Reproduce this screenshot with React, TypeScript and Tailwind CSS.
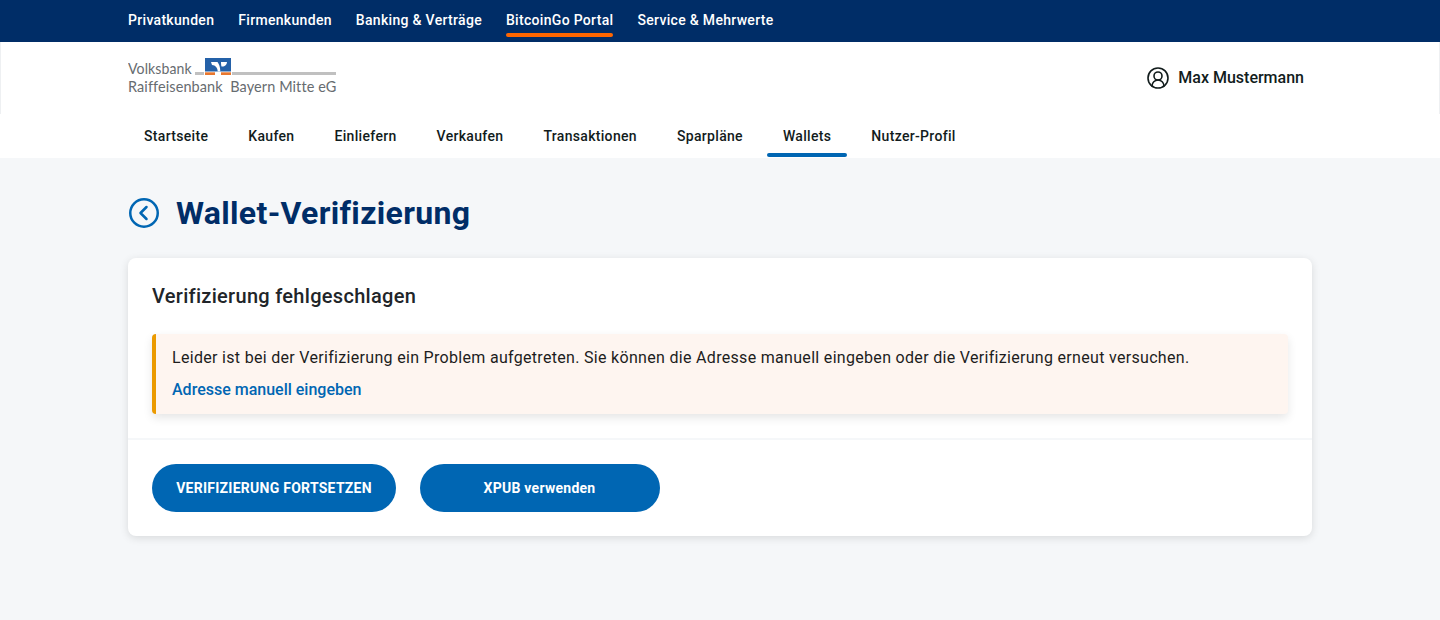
import { CircleUserRound } from "lucide-react";

const TOP_LINKS = ["Privatkunden", "Firmenkunden", "Banking & Verträge", "BitcoinGo Portal", "Service & Mehrwerte"];
const NAV_LINKS = ["Startseite", "Kaufen", "Einliefern", "Verkaufen", "Transaktionen", "Sparpläne", "Wallets", "Nutzer-Profil"];

function Logo() {
  return (
    <div className="w-[208px] font-['Lato',sans-serif] text-[#676c70] text-[16px] tracking-[0.1px]">
      <div className="flex items-end h-[20px]">
        <span className="w-[63px] whitespace-nowrap leading-[20px] origin-left scale-x-[0.88]">Volksbank</span>
        <span className="w-[9px] h-[3px] bg-[#c0c0c0] ml-[4px] mr-[1px] mb-[3px]" />
        <svg width="26" height="17" viewBox="0 0 26 17" className="shrink-0 mb-[3px]">
          <rect width="26" height="13.500" fill="#2461a8" />
          <path d="M6 4H12.500C14 6 15.300 9 15.300 13.500H12.700C12.700 10 10.500 7 7 7Z" fill="#fff" />
          <path d="M16 4H22C22 6.500 19.500 9 16.500 8.500C16 6.500 16 5.500 16 4Z" fill="#fff" />
          <rect y="14.300" width="10" height="2.700" fill="#e8772e" />
          <rect x="16" y="14.300" width="10" height="2.700" fill="#e8772e" />
        </svg>
        <span className="flex-1 h-[3px] bg-[#c0c0c0] ml-[1px] mb-[3px]" />
      </div>
      <div className="whitespace-nowrap leading-[18px] -mt-[1px] origin-left scale-x-[0.905]">Raiffeisenbank&nbsp; Bayern Mitte eG</div>
    </div>
  );
}

export default function App() {
  return (
    <div className="min-h-[620px] bg-[#f5f7f9] font-['Roboto',sans-serif]">
      <div className="h-[42px] bg-[#002d67] pl-[128px] flex gap-[24px]">
        {TOP_LINKS.map((l) => (
          <a key={l} className="h-[37px] flex flex-col text-[14px] font-medium tracking-[0.31px] text-white">
            <span className="flex-1 flex items-center pt-[7px]">{l}</span>
            <span className={`h-[4px] rounded-full ${l === "BitcoinGo Portal" ? "bg-[#ff6600]" : ""}`} />
          </a>
        ))}
      </div>

      <div className="h-[72px] bg-white border-x border-[#eef0f2] pl-[127px] pr-[135px] flex items-center justify-between">
        <div className="pb-[3px]">
          <Logo />
        </div>
        <div className="flex items-center gap-[8px] text-[#121c1c]">
          <CircleUserRound size={24} strokeWidth={1.6} />
          <span className="text-[16px] font-medium">Max Mustermann</span>
        </div>
      </div>

      <div className="h-[44px] bg-white pl-[128px] flex">
        {NAV_LINKS.map((l) => (
          <a key={l} className="h-[43px] px-[16px] mr-[8px] flex flex-col text-[14px] font-medium tracking-[0.32px] text-[#121c1c]">
            <span className="flex-1 flex items-center pt-[5px]">{l}</span>
            <span className={`h-[4px] rounded-full ${l === "Wallets" ? "bg-[#0066b3] -mx-[16px]" : ""}`} />
          </a>
        ))}
      </div>

      <div className="pl-[128px] pr-[128px]">
        <div className="h-[100px] flex items-center gap-[16px] pt-[10px]">
          <svg width="32" height="32" viewBox="0 0 32 32" fill="none" stroke="#0066b3" className="shrink-0">
            <circle cx="16" cy="16" r="13.750" strokeWidth="2.500" />
            <path d="M18.500 10l-6 6 6 6" strokeWidth="2.500" strokeLinecap="round" strokeLinejoin="round" />
          </svg>
          <h1 className="text-[32px] font-bold text-[#002d67] leading-none tracking-[0.33px]">Wallet-Verifizierung</h1>
        </div>

        <div className="bg-white rounded-[8px] shadow-[0_2px_8px_rgba(0,0,0,0.12)]">
          <div className="px-[24px] pt-[24px] pb-[24px] h-[182px] border-b-2 border-[#f5f7f9]">
            <h2 className="text-[20px] font-medium text-[#212529] leading-[28px] tracking-[0.3px]">Verifizierung fehlgeschlagen</h2>
            <div className="mt-[24px] h-[80px] bg-[#fef5f0] border-l-[4px] border-[#eb9a00] rounded-[4px] pl-[16px] pt-[13px] shadow-[0_4px_10px_rgba(0,0,0,0.1)]">
              <p className="text-[16px] leading-[22px] text-[#1d1d1d] tracking-[0.31px]">
                Leider ist bei der Verifizierung ein Problem aufgetreten. Sie können die Adresse manuell eingeben oder die Verifizierung erneut versuchen.
              </p>
              <a className="block mt-[10px] text-[16px] leading-[22px] font-medium text-[#0066b3]">Adresse manuell eingeben</a>
            </div>
          </div>
          <div className="p-[24px] flex gap-[24px]">
            <button className="h-[48px] w-[244px] rounded-full bg-[#0066b3] text-white text-[14px] font-bold tracking-[0.26px]">VERIFIZIERUNG FORTSETZEN</button>
            <button className="h-[48px] w-[240px] pr-[1px] rounded-full bg-[#0066b3] text-white text-[14px] font-bold tracking-[0.26px]">XPUB verwenden</button>
          </div>
        </div>
      </div>
    </div>
  );
}
